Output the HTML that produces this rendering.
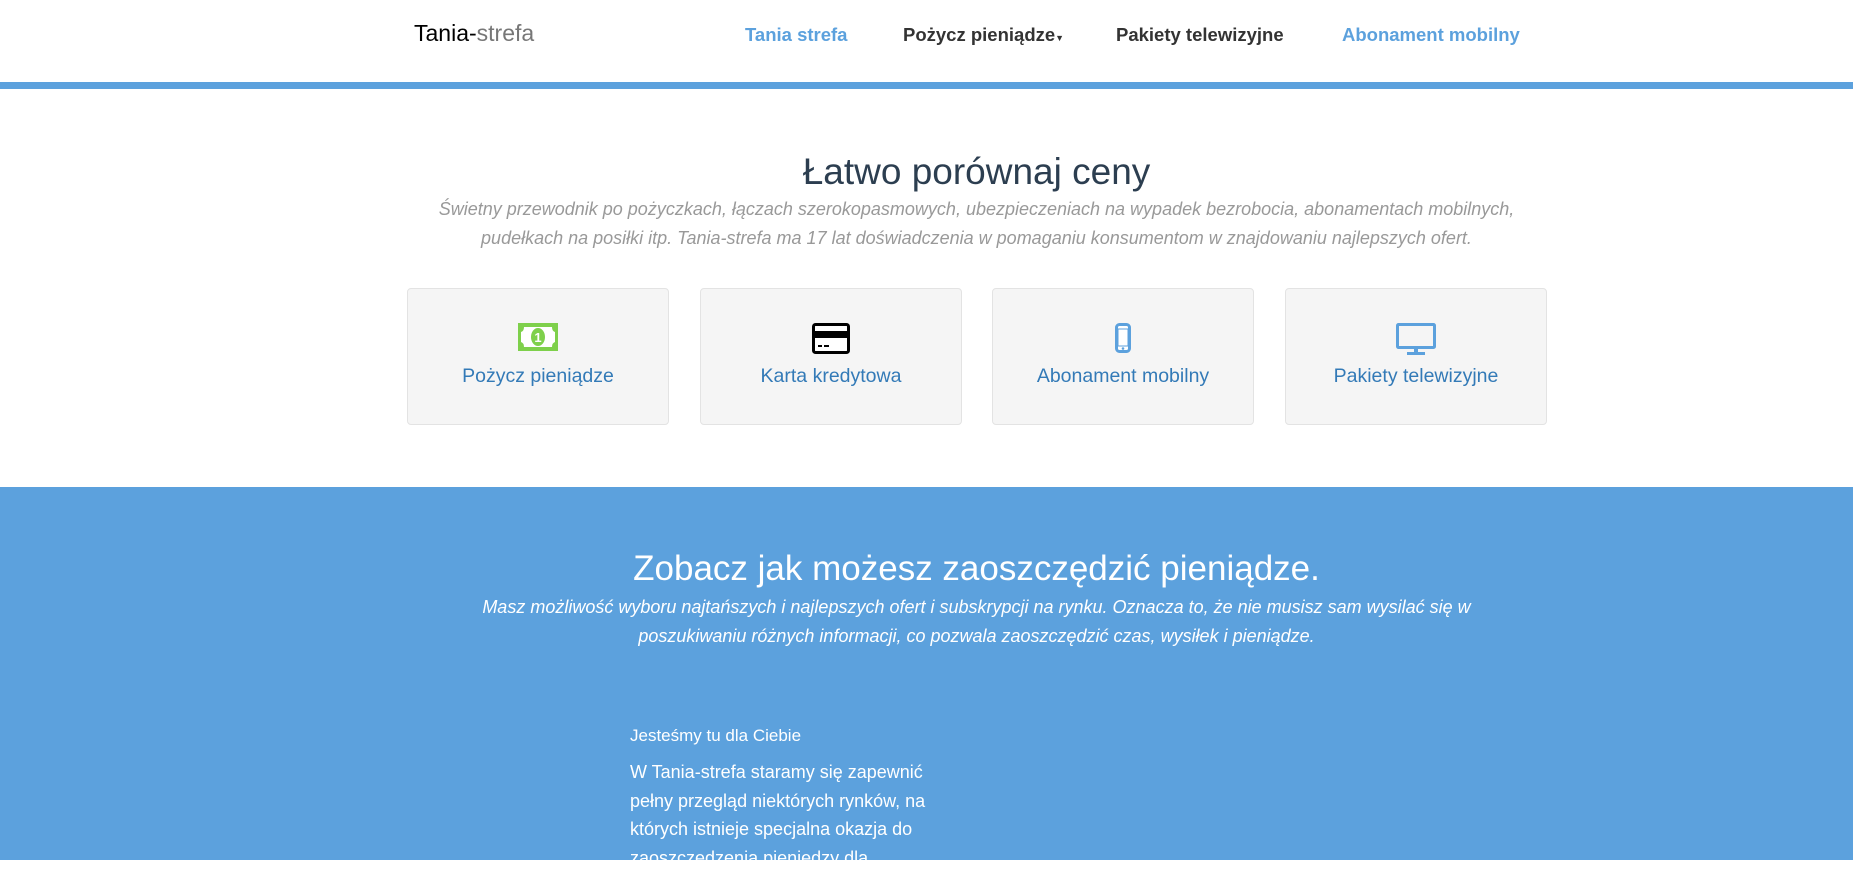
<!DOCTYPE html>
<html><head><meta charset="utf-8"><style>
*{margin:0;padding:0;box-sizing:border-box}
body{width:1853px;height:860px;overflow:hidden;background:#fff;font-family:"Liberation Sans",sans-serif;position:relative}
.a{position:absolute;white-space:nowrap}
.nav{font-weight:bold;font-size:18.5px;top:24px}
.card{position:absolute;top:288px;width:262px;height:137px;background:#f5f5f5;border:1px solid #e3e3e3;border-radius:4px}
.card .l{position:absolute;top:76px;width:100%;text-align:center;color:#337ab7;font-size:19.5px}
.card svg{position:absolute;left:50%;top:34px;transform:translateX(-50%)}
.c{left:0;width:1953px;text-align:center}
</style></head><body>
<div class="a" style="left:414px;top:20px;font-size:23px;color:#000">Tania-<span style="color:#777">strefa</span></div>
<div class="a nav" style="left:745px;color:#5ca1dd">Tania strefa</div>
<div class="a nav" style="left:903px;color:#333">Pożycz pieniądze<span style="font-size:9px">▼</span></div>
<div class="a nav" style="left:1116px;color:#333">Pakiety telewizyjne</div>
<div class="a nav" style="left:1342px;color:#5ca1dd">Abonament mobilny</div>
<div class="a" style="left:0;top:82px;width:1853px;height:7px;background:#5ca1dd"></div>
<div class="a c" style="top:151px;font-size:37px;color:#2c3e50">Łatwo porównaj ceny</div>
<div class="a c" style="top:195px;font-size:18px;line-height:29px;color:#999;font-style:italic;white-space:normal">Świetny przewodnik po pożyczkach, łączach szerokopasmowych, ubezpieczeniach na wypadek bezrobocia, abonamentach mobilnych,<br>pudełkach na posiłki itp. Tania-strefa ma 17 lat doświadczenia w pomaganiu konsumentom w znajdowaniu najlepszych ofert.</div>
<div class="card" style="left:407px"><svg width="40" height="28" viewBox="0 0 40 28"><rect width="40" height="28" fill="#7ed04b"/><path d="M6 4h28q0 4 3 5v10q-3 1-3 5H6q0-4-3-5V9q3-1 3-5z" fill="#fff"/><ellipse cx="20" cy="14" rx="7" ry="9" fill="#7ed04b"/><text x="20" y="19" font-size="13" font-weight="bold" fill="#fff" text-anchor="middle" font-family="Liberation Sans">1</text></svg><div class="l">Pożycz pieniądze</div></div>
<div class="card" style="left:700px"><svg width="38" height="31" viewBox="0 0 38 31"><rect x="1.5" y="1.5" width="35" height="28" rx="2" fill="#fff" stroke="#000" stroke-width="3"/><rect x="1" y="8" width="36" height="7" fill="#000"/><rect x="6" y="22" width="4" height="2"/><rect x="12" y="22" width="5" height="2"/></svg><div class="l">Karta kredytowa</div></div>
<div class="card" style="left:992px"><svg width="16" height="30" viewBox="0 0 16 30"><rect x="1.5" y="1.5" width="13" height="27" rx="3" fill="#fff" stroke="#5ca1dd" stroke-width="3"/><rect x="3" y="6" width="10" height="17" fill="#fff" stroke="#5ca1dd" stroke-width="1"/><circle cx="8" cy="25.5" r="1.3" fill="#5ca1dd"/></svg><div class="l">Abonament mobilny</div></div>
<div class="card" style="left:1285px"><svg width="40" height="32" viewBox="0 0 40 32"><rect x="1.5" y="1.5" width="37" height="23" rx="1" fill="none" stroke="#5ca1dd" stroke-width="3"/><rect x="18" y="25" width="4" height="4" fill="#5ca1dd"/><rect x="11" y="29" width="18" height="3" fill="#5ca1dd"/></svg><div class="l">Pakiety telewizyjne</div></div>
<div class="a" style="left:0;top:487px;width:1853px;height:373px;background:#5ca1dd"></div>
<div class="a c" style="top:549px;font-size:35px;color:#fff">Zobacz jak możesz zaoszczędzić pieniądze.</div>
<div class="a c" style="top:593px;font-size:18px;line-height:29px;color:#fff;font-style:italic">Masz możliwość wyboru najtańszych i najlepszych ofert i subskrypcji na rynku. Oznacza to, że nie musisz sam wysilać się w<br>poszukiwaniu różnych informacji, co pozwala zaoszczędzić czas, wysiłek i pieniądze.</div>
<div class="a" style="left:630px;top:726px;font-size:17px;color:#fff">Jesteśmy tu dla Ciebie</div>
<div class="a" style="left:630px;top:758px;font-size:18px;line-height:28.5px;color:#fff">W Tania-strefa staramy się zapewnić<br>pełny przegląd niektórych rynków, na<br>których istnieje specjalna okazja do<br>zaoszczędzenia pieniędzy dla</div>
</body></html>
